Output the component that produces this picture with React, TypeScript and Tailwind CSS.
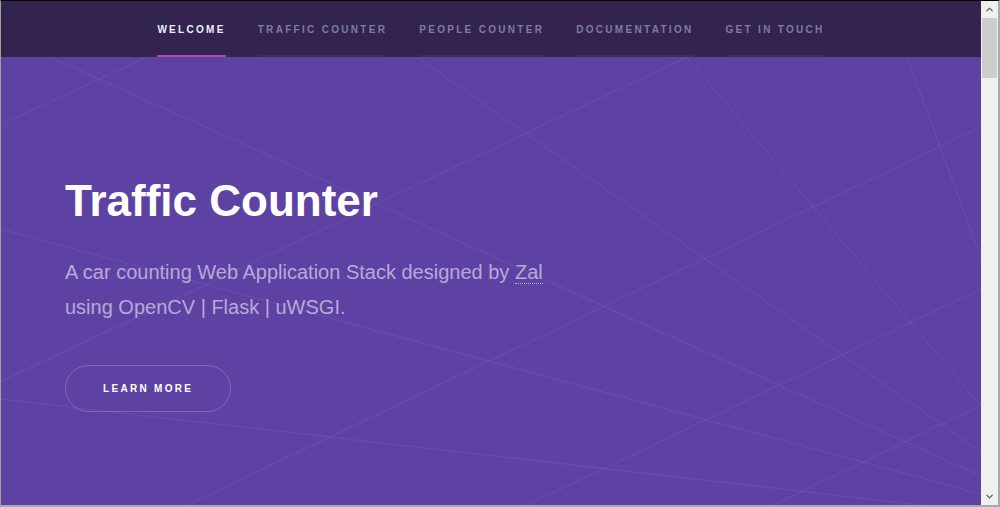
import { ChevronUp, ChevronDown } from "lucide-react"

const navItems = ["Welcome", "Traffic Counter", "People Counter", "Documentation", "Get in touch"]

// background wire lines, page coordinates
const lines: [number, number, number, number][] = [
  [50, 57, 981, 476],
  [417, 57, 981, 452],
  [0, 229, 981, 494],
  [687, 57, 0, 382],
  [981, 127, 183, 507],
  [981, 289, 523, 507],
  [981, 405, 770, 507],
  [687, 57, 981, 406],
  [907, 57, 981, 258],
  [0, 399, 981, 512],
  [147, 57, 0, 125],
]

function Scrollbar() {
  return (
    <div className="flex w-[17px] flex-col bg-[#f0f0f0]">
      <div className="flex h-[17px] items-center justify-center text-[#606060]">
        <ChevronUp className="h-[11px] w-[11px]" strokeWidth={3} />
      </div>
      <div className="mx-[1px] h-[60px] bg-[#cdcdcd]" />
      <div className="flex-1" />
      <div className="flex h-[17px] items-center justify-center text-[#606060]">
        <ChevronDown className="h-[11px] w-[11px]" strokeWidth={3} />
      </div>
    </div>
  )
}

export default function App() {
  return (
    <div
      className="flex h-[507px] w-[1000px] border-t border-l border-r-2 border-b-2 border-t-black border-l-[#9fa396] border-r-[#a7abb0] border-b-[#a7abb0]"
      style={{ fontFamily: '"Liberation Sans", Arial, sans-serif' }}
    >
      <div className="flex flex-1 flex-col bg-[#5d42a4]">
        <nav className="flex h-[56px] justify-center gap-8 bg-[#32244f]">
          {navItems.map((item, i) => (
            <a
              key={item}
              className={
                "flex items-center border-b-2 pb-[1px] pt-[3px] text-[10px] font-bold uppercase tracking-[2.3px] " +
                (i === 0 ? "border-[#b6479c] text-[#eef0f6]" : "border-[#3b2d5c] text-[#807b9f]")
              }
            >
              {item}
            </a>
          ))}
        </nav>

        <section className="relative flex-1 overflow-hidden">
          <svg className="absolute inset-0 h-full w-full" viewBox="0 0 980 448" preserveAspectRatio="none">
            <g transform="translate(-1,-57)" stroke="#ffffff" strokeOpacity="0.075" strokeWidth="1">
              {lines.map(([x1, y1, x2, y2], i) => (
                <line key={i} x1={x1} y1={y1} x2={x2} y2={y2} />
              ))}
            </g>
          </svg>

          <div className="relative flex flex-col items-start pl-[64px] pt-[122px]">
            <h1 className="text-[44px] font-bold leading-[44px] text-white">Traffic Counter</h1>
            <p className="mt-8 text-[20px] leading-[35px] text-[#b6aad6]">
              A car counting Web Application Stack designed by{" "}
              <span className="border-b border-dotted border-[#b6aad6]">Zal</span>
              <br />
              using OpenCV | Flask | uWSGI.
            </p>
            <button className="mt-10 flex h-[47px] items-center rounded-full border border-white/20 px-[37px] text-[10px] font-bold uppercase tracking-[2.3px] text-white">
              Learn More
            </button>
          </div>
        </section>
      </div>
      <Scrollbar />
    </div>
  )
}
